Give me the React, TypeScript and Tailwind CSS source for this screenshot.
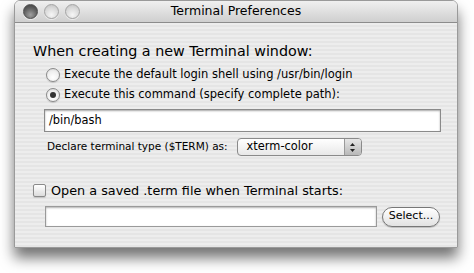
import React from "react";

function Light({ dark }: { dark?: boolean }) {
  return (
    <div
      className={
        dark
          ? "w-[15px] h-[15px] rounded-full border border-[#505050] bg-[radial-gradient(circle_at_50%_75%,#a0a0a0_0%,#626262_55%,#3a3a3a_100%)] shadow-[0_1px_1px_rgba(255,255,255,0.6)]"
          : "w-[15px] h-[15px] rounded-full border border-[#a4a4a4] bg-[radial-gradient(circle_at_50%_75%,#f6f6f6_0%,#d8d8d8_60%,#bdbdbd_100%)] shadow-[0_1px_1px_rgba(255,255,255,0.6)]"
      }
    />
  );
}

function Radio({ on }: { on?: boolean }) {
  return (
    <div className="w-[14px] h-[14px] shrink-0 rounded-full border border-[#8a8a8a] bg-[radial-gradient(circle_at_50%_70%,#ffffff_0%,#eeeeee_60%,#cfcfcf_100%)] flex items-center justify-center shadow-[0_1px_1px_rgba(0,0,0,0.15)]">
      {on && <div className="w-[6px] h-[6px] rounded-full bg-[#333]" />}
    </div>
  );
}

export default function App() {
  return (
    <div className="w-[474px] h-[273px] bg-white relative" style={{ fontFamily: '"DejaVu Sans", sans-serif' }}>
      <div className="absolute left-[14px] top-0 w-[444px] h-[248px] rounded-t-[6px] overflow-hidden border border-[#9a9a9a] shadow-[0_10px_14px_rgba(0,0,0,0.55)] flex flex-col">
        <div className="h-[22px] shrink-0 bg-[linear-gradient(#f0f0f0,#cfcfcf)] border-b border-[#8c8c8c] flex items-center relative">
          <div className="flex gap-[6px] pl-[8px] relative z-10">
            <Light dark />
            <Light />
            <Light />
          </div>
          <div className="absolute inset-0 flex items-center justify-center text-[12.5px] text-black">Terminal Preferences</div>
        </div>
        <div className="flex-1 bg-[repeating-linear-gradient(#ededed_0px,#ededed_2px,#e5e5e5_2px,#e5e5e5_4px)] pl-[18px] pr-[16px] pt-[20px]">
          <div className="text-[14.3px] text-black leading-[17px] h-[17px]">When creating a new Terminal window:</div>
          <div className="pl-[13px] mt-[7px] flex flex-col gap-[4px] text-[11.5px] text-black">
            <div className="flex items-center gap-[4px] h-[16px]">
              <Radio />
              <span>Execute the default login shell using /usr/bin/login</span>
            </div>
            <div className="flex items-center gap-[4px] h-[16px]">
              <Radio on />
              <span>Execute this command (specify complete path):</span>
            </div>
          </div>
          <div className="ml-[11px] mt-[6px] h-[23px] bg-white border border-[#8a8a8a] shadow-[inset_0_1px_2px_rgba(0,0,0,0.35)] flex items-center px-[4px] text-[11.4px] text-black">
            /bin/bash
          </div>
          <div className="ml-[14px] mt-[6px] h-[18px] flex items-center gap-[9px] text-[10.5px] text-black">
            <span>Declare terminal type ($TERM) as:</span>
            <div className="w-[125px] h-[18px] rounded-[4px] border border-[#8a8a8a] bg-[linear-gradient(#ffffff,#e8e8e8)] flex items-center overflow-hidden text-[11.4px]">
              <span className="flex-1 pl-[9px]">xterm-color</span>
              <div className="w-[17px] h-full bg-[linear-gradient(#e6e6e6,#b8b8b8)] border-l border-[#9a9a9a] flex items-center justify-center">
                <svg width="7" height="11" viewBox="0 0 7 11">
                  <path d="M3.5 1 L6 4 L1 4 Z" fill="#222" />
                  <path d="M3.5 10 L6 7 L1 7 Z" fill="#222" />
                </svg>
              </div>
            </div>
          </div>
          <div className="mt-[26px] h-[17px] flex items-center gap-[5px] text-[12.8px] text-black">
            <div className="w-[13px] h-[13px] shrink-0 rounded-[2px] border border-[#8a8a8a] bg-[linear-gradient(#ffffff,#dcdcdc)] shadow-[0_1px_1px_rgba(0,0,0,0.15)]" />
            <span>Open a saved .term file when Terminal starts:</span>
          </div>
          <div className="ml-[12px] mt-[7px] flex items-center gap-[5px]">
            <div className="w-[332px] h-[21px] bg-white border border-[#9a9a9a] shadow-[inset_0_1px_2px_rgba(0,0,0,0.3)]" />
            <div className="w-[58px] h-[20px] rounded-full border border-[#777] bg-[linear-gradient(#ffffff,#e2e2e2)] flex items-center justify-center text-[11px] text-black shadow-[0_1px_1px_rgba(0,0,0,0.2)]">
              Select...
            </div>
          </div>
        </div>
      </div>
    </div>
  );
}
